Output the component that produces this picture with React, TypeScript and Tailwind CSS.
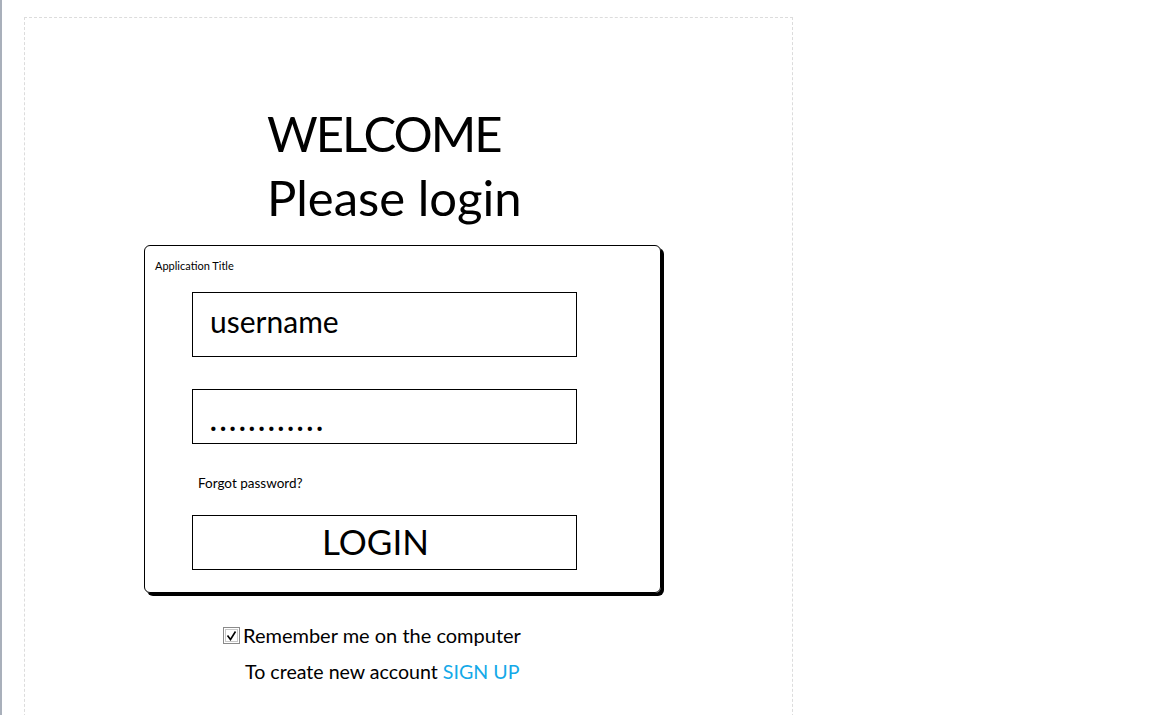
import React from 'react';

export default function App() {
  return (
    <div className="h-[715px] w-full overflow-hidden bg-white font-['Lato',sans-serif] text-black">
      <div className="flex h-full border-l-2 border-[#a9b0bb]">
        {/* mockup canvas */}
        <div className="ml-[22px] mt-[17px] h-[720px] w-[769px] border border-dashed border-[#dcdcdc]">
          <div className="ml-[242px] mt-[83px] text-[49px] leading-[64px]">
            <div className="tracking-[-2px]">WELCOME</div>
            <div>Please login</div>
          </div>

          {/* login card */}
          <div className="ml-[119px] mt-[16px] flex w-[517px] flex-col rounded-[6px] border border-black pb-[22px] shadow-[3px_3px_0_0_#000]">
            <div className="pl-[10px] pt-[13px] text-[11px] leading-[14px]">Application Title</div>
            <div className="ml-[47px] mt-[19px] flex h-[65px] w-[385px] items-center border border-black pb-[6px] pl-[17px] text-[30px]">
              username
            </div>
            <div className="ml-[47px] mt-[32px] flex h-[55px] w-[385px] items-center border border-black pl-[17px] pt-[6px] text-[28px] font-bold tracking-[3px]">
              ............
            </div>
            <div className="ml-[53px] mt-[31px] text-[13.5px] leading-[16px]">Forgot password?</div>
            <button className="ml-[47px] mt-[24px] flex h-[55px] w-[385px] items-center justify-center border border-black pb-[3px] pr-[18px] text-[35px]">
              LOGIN
            </button>
          </div>

          <div className="ml-[198px] mt-[30px] flex items-center gap-[3px] text-[20px] leading-[24px]">
            <div className="flex h-[17px] w-[17px] items-center justify-center border border-[#8a8a8a] bg-white">
              <div className="flex h-[13px] w-[13px] items-center justify-center border border-[#c8c8c8]">
                <svg width="11" height="11" viewBox="0 0 11 11" fill="none">
                  <path d="M1.5 5.5 L4.5 9.5 L9.5 1.5" stroke="#000" strokeWidth="1.6" />
                </svg>
              </div>
            </div>
            <span>Remember me on the computer</span>
          </div>
          <div className="ml-[220px] mt-[13px] text-[19.6px] leading-[24px]">
            To create new account <span className="text-[#14a9e8]">SIGN UP</span>
          </div>
        </div>
      </div>
    </div>
  );
}
